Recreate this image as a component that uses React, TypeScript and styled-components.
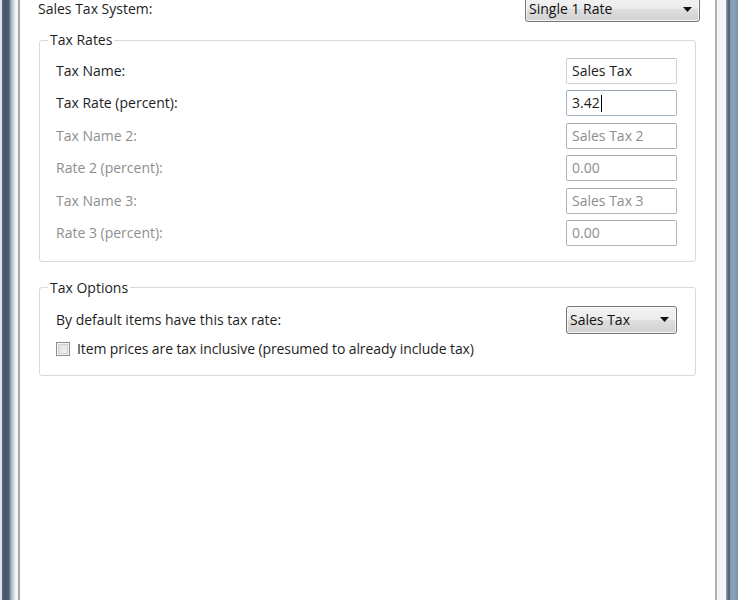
import React from "react";
import styled, { createGlobalStyle } from "styled-components";

const GlobalStyle = createGlobalStyle`
  html, body { margin: 0; padding: 0; background: #ffffff; }
  body { font-family: "Open Sans", "Noto Sans", sans-serif; font-size: 14px; color: #1e1e1e; }
  * { box-sizing: border-box; }
`;

const Window = styled.div`
  display: flex;
  width: 738px;
  height: 600px;
  overflow: hidden;
`;

const LeftFrame = styled.div`
  width: 20px;
  flex: none;
  background: linear-gradient(
    to right,
    #dfe3e8 0px, #dfe3e8 2px,
    #56657a 2px, #445368 5px, #4f5f75 9px,
    #7d8ea3 10px, #b9c4d0 12px, #cfd7e0 14px,
    #eef1f4 15px, #f6f7f9 18px,
    #9ea2a9 18px, #a7abb1 20px
  );
`;

const RightFrame = styled.div`
  width: 23px;
  flex: none;
  background: linear-gradient(
    to right,
    #a9abae 0px, #b4b6b9 2px,
    #f1f3f5 2px, #f6f7f9 11px,
    #a0a9b3 11px, #5a6a7e 13px, #56667a 15px,
    #8199b2 15px, #8aa1b9 19px, #7a90a8 23px
  );
`;

const Dialog = styled.div`
  flex: 1;
  background: #ffffff;
  display: flex;
  flex-direction: column;
`;

const TopRow = styled.div`
  display: flex;
  align-items: center;
  justify-content: space-between;
  height: 26px;
  margin-top: -4px;
  padding: 0 15px 0 18px;
`;

const Label = styled.span<{ $disabled?: boolean }>`
  font-size: 14px;
  line-height: 18px;
  color: ${(p) => (p.$disabled ? "#8e8e8e" : "#1e1e1e")};
  white-space: nowrap;
`;

const Combo = styled.div<{ $width: number; $height: number }>`
  width: ${(p) => p.$width}px;
  height: ${(p) => p.$height}px;
  border: 1px solid #767676;
  border-radius: 3px;
  background: linear-gradient(to bottom, #f3f3f3 0%, #ebebeb 50%, #dedede 50%, #d2d2d2 100%);
  box-shadow: inset 0 0 0 1px rgba(255, 255, 255, 0.7);
  display: flex;
  align-items: center;
  justify-content: space-between;
  padding: 0 7px 0 3px;
  font-size: 14px;
  line-height: 18px;
  color: #111;
  flex: none;
`;

const Arrow = () => (
  <svg width="9" height="5" viewBox="0 0 9 5" aria-hidden="true">
    <polygon points="0,0 9,0 4.5,5" fill="#111" />
  </svg>
);

const Group = styled.fieldset<{ $top: number }>`
  margin: ${(p) => p.$top}px 19px 0 19px;
  padding: 0;
  border: 1px solid #d6d9dd;
  border-radius: 3px;
  min-width: 0;
`;

const Legend = styled.legend`
  margin-left: 8px;
  padding: 0 2px;
  font-size: 14px;
  line-height: 18px;
  color: #1e1e1e;
`;

const RatesBody = styled.div`
  display: grid;
  grid-auto-rows: 26px;
  row-gap: 6.4px;
  padding: 9px 18px 15px 16px;
`;

const OptionsBody = styled.div`
  display: flex;
  flex-direction: column;
  padding: 9px 18px 17px 16px;
`;

const FieldRow = styled.div<{ $height?: number }>`
  display: flex;
  align-items: center;
  justify-content: space-between;
  height: ${(p) => p.$height ?? 26}px;
`;

const Field = styled.div<{ $disabled?: boolean; $focused?: boolean }>`
  width: 111px;
  height: 26px;
  border: 1px solid
    ${(p) => (p.$disabled ? "#b3b3b3" : p.$focused ? "#a7b6c8" : "#cfd3d8")};
  border-top-color: ${(p) => (p.$disabled ? "#aaaaaa" : p.$focused ? "#97a8bd" : "#bfc4ca")};
  border-radius: 2px;
  background: #ffffff;
  display: flex;
  align-items: center;
  padding-left: 5px;
  font-size: 14px;
  line-height: 18px;
  color: ${(p) => (p.$disabled ? "#8e8e8e" : "#1e1e1e")};
  white-space: nowrap;
`;

const Caret = styled.span`
  display: inline-block;
  width: 1px;
  height: 17px;
  background: #000;
  margin-left: 1px;
`;

const CheckRow = styled.label`
  display: flex;
  align-items: center;
  height: 18px;
  margin-top: 6px;
  gap: 7px;
`;

const CheckBox = styled.span`
  width: 14px;
  height: 14px;
  flex: none;
  border: 1px solid #8f8f8f;
  background: linear-gradient(135deg, #dcdcdc 0%, #f4f4f4 100%);
  box-shadow: inset 0 0 0 1px #f4f4f4, inset 0 0 0 2px #d0d0d0;
`;

const CheckLabel = styled(Label)`
  letter-spacing: -0.1px;
`;

const rates = [
  { label: "Tax Name:", value: "Sales Tax", disabled: false },
  { label: "Tax Rate (percent):", value: "3.42", disabled: false, focused: true },
  { label: "Tax Name 2:", value: "Sales Tax 2", disabled: true },
  { label: "Rate 2 (percent):", value: "0.00", disabled: true },
  { label: "Tax Name 3:", value: "Sales Tax 3", disabled: true },
  { label: "Rate 3 (percent):", value: "0.00", disabled: true },
];

export default function App() {
  return (
    <>
      <GlobalStyle />
      <Window>
        <LeftFrame />
        <Dialog>
          <TopRow>
            <Label>Sales Tax System:</Label>
            <Combo $width={175} $height={26}>
              <span>Single 1 Rate</span>
              <Arrow />
            </Combo>
          </TopRow>

          <Group $top={9}>
            <Legend>Tax Rates</Legend>
            <RatesBody>
              {rates.map((r) => (
                <FieldRow key={r.label}>
                  <Label $disabled={r.disabled}>{r.label}</Label>
                  <Field $disabled={r.disabled} $focused={r.focused}>
                    {r.value}
                    {r.focused && <Caret />}
                  </Field>
                </FieldRow>
              ))}
            </RatesBody>
          </Group>

          <Group $top={17}>
            <Legend>Tax Options</Legend>
            <OptionsBody>
              <FieldRow $height={28}>
                <Label>By default items have this tax rate:</Label>
                <Combo $width={111} $height={28}>
                  <span>Sales Tax</span>
                  <Arrow />
                </Combo>
              </FieldRow>
              <CheckRow>
                <CheckBox />
                <CheckLabel>Item prices are tax inclusive (presumed to already include tax)</CheckLabel>
              </CheckRow>
            </OptionsBody>
          </Group>
        </Dialog>
        <RightFrame />
      </Window>
    </>
  );
}
